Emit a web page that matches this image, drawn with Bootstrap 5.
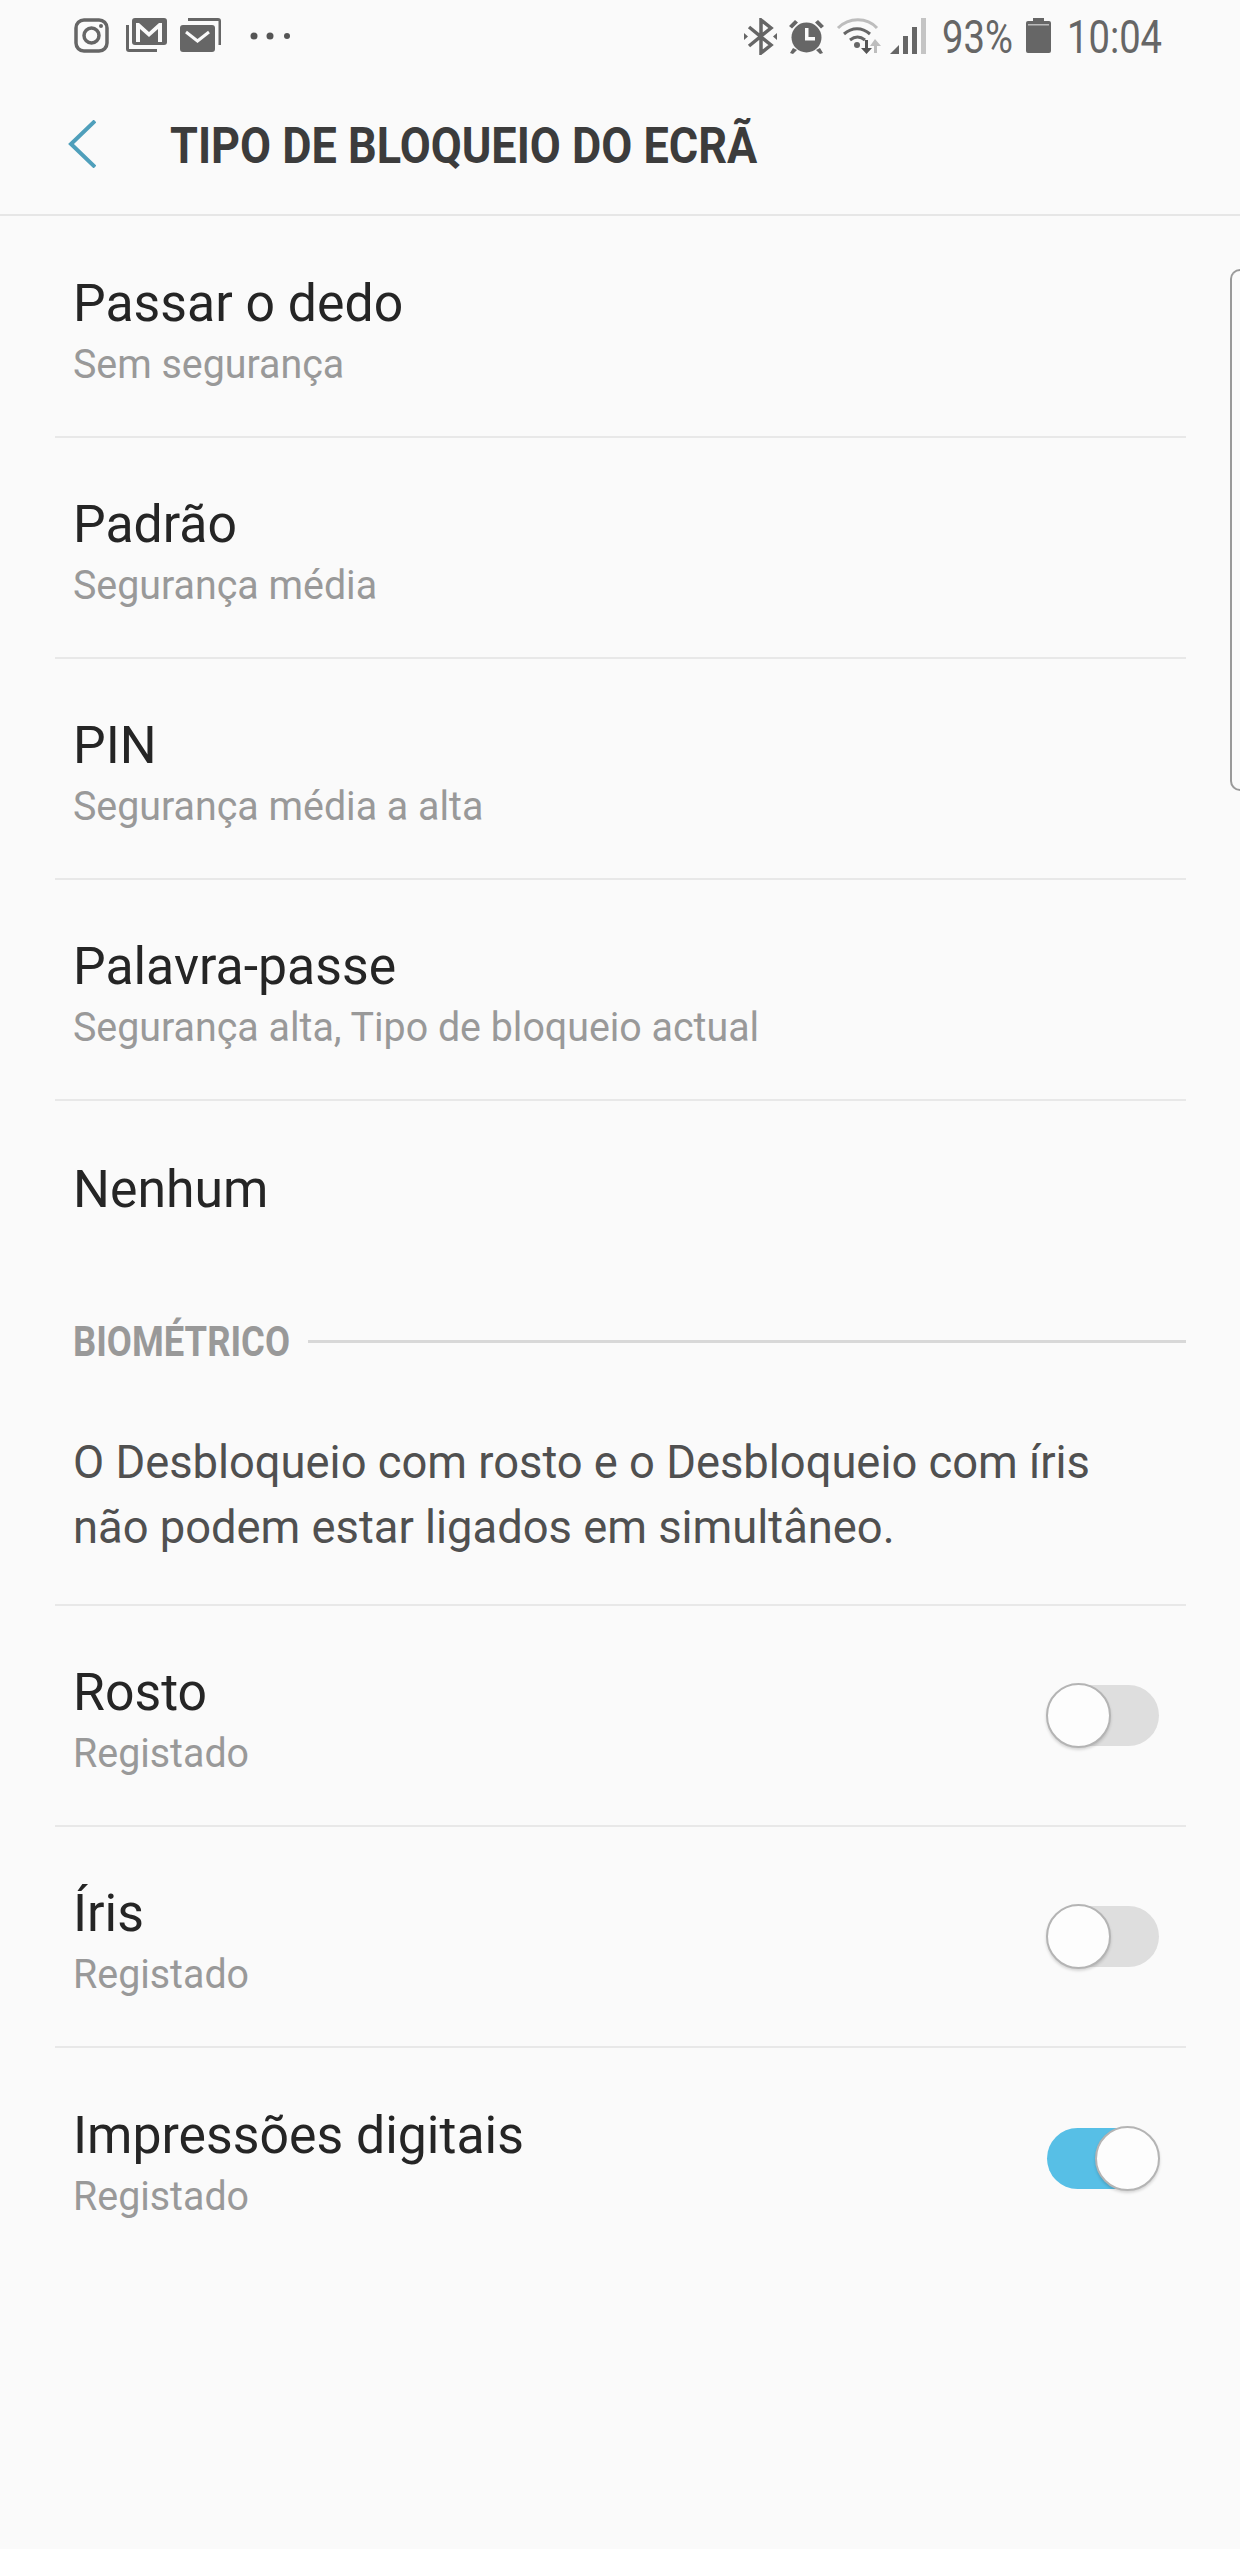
<!DOCTYPE html>
<html lang="pt"><head><meta charset="utf-8"><title>Tipo de bloqueio do ecrã</title>
<link href="https://cdn.jsdelivr.net/npm/bootstrap@5.3.0/dist/css/bootstrap.min.css" rel="stylesheet">
<script src="https://cdn.jsdelivr.net/npm/bootstrap@5.3.0/dist/js/bootstrap.bundle.min.js"></script>
<style>
html,body{background:#fafafa}
body{width:1240px;height:2549px;overflow:hidden;font-family:Roboto,"Liberation Sans",sans-serif;position:relative}
.squeeze{display:inline-block;transform-origin:left center;white-space:nowrap}
.status-bar{height:74px;padding:18px 77px 0 74px}
.status-bar svg{display:block;fill:#666}
.left-icons{gap:16px}
.status-bar svg.insta{fill:none;stroke:#666;stroke-width:3.5}
.status-bar svg.insta circle.dot{fill:#666;stroke:none}
.mail-icon{margin-left:-3px}
.dots{margin-left:13px;margin-top:10px}
.right-icons svg{margin-right:11px}
.right-icons svg.wifi{margin-right:7px}
.right-icons svg.signal{margin-right:16px}
.right-icons svg.battery{margin-right:0}
.status-text{font-size:46px;line-height:37px;color:#666;width:84px;padding-top:1px}
.time-text{width:96px;margin-left:4px}
.s-93{transform:scaleX(.83)}
.s-time{transform:scaleX(.83)}
.app-head{height:142px;border-bottom:2px solid #e6e6e6;padding-left:66px}
.back-arrow{width:30px;height:48px;margin-right:74px}
.page-title{font-size:50px;font-weight:700;color:#3c3c3c;line-height:1;transform:scaleX(.9);padding-top:4px}
.rows{margin:0 54px 0 55px}
.rows.first-rows{margin-top:1px}
.rows .list-group-item{background:transparent;border-color:#e8e8e8;border-width:0 0 2px;padding:0 27px 0 18px;height:221px;display:flex;align-items:center;justify-content:space-between}
.rows .list-group-item.plain{height:177px;border-bottom:0}
.row-title{font-size:51px;line-height:60px;color:#252525;transform:scaleX(1.015)}
.row-sub{font-size:40px;line-height:52px;color:#999;margin-top:5px;transform:scaleX(.984)}
.row-offset{margin-top:12px}
.section-head{height:50px;margin:38px 54px 0 73px;gap:19px}
.section-name{font-size:43px;font-weight:700;color:#999;line-height:1;width:216px}
.section-name span{transform:scaleX(.846)}
.section-line{height:3px;background:#d8d8d8}
.note{font-size:46px;line-height:65px;color:#505050;margin:0;padding:64px 0 44px 18px;white-space:nowrap}
.note span{transform:scaleX(.985);display:block;transform-origin:left}
.bio-rows{border-top:2px solid #e8e8e8}
.track{width:112px;height:61px;border-radius:31px;background:#dedede;display:flex;align-items:center;justify-content:flex-start}
.track.on{background:#57bfe6;justify-content:flex-end}
.knob{width:65px;height:65px;border-radius:50%;background:#fdfdfd;border:2px solid #b4b4b4;box-shadow:0 2px 3px rgba(0,0,0,.15);flex:none}
.track.on .knob{margin-right:-1px}
.track:not(.on) .knob{margin-left:-1px}
.edge-handle{position:absolute;left:1230px;top:269px;width:14px;height:522px;border:2px solid #999;border-right:0;border-radius:10px 0 0 10px}
</style></head>
<body class="m-0">
<div class="status-bar d-flex justify-content-between align-items-start">
  <div class="left-icons d-flex align-items-start">
    <svg class="insta" width="35" height="35" viewBox="0 0 35 35"><rect x="2" y="2" width="31" height="31" rx="8"/><circle cx="17.5" cy="17.5" r="7.5"/><circle class="dot" cx="27" cy="8" r="2"/></svg>
    <svg width="42" height="35" viewBox="0 0 42 35"><path d="M1 7h3v24h28v3H4a3 3 0 0 1-3-3z"/><rect x="7" y="0" width="35" height="27" rx="3"/><path d="M11 24V5h3l10 9 10-9h3v19h-4V11l-9 8-9-8v13z" fill="#fafafa"/></svg>
    <svg class="mail-icon" width="41" height="35" viewBox="0 0 41 35"><path d="M8 0h30a3 3 0 0 1 3 3v24h-2.500V3H8z"/><rect x="0" y="7" width="35" height="27" rx="3"/><path d="M6 14l11.500 9L29 14" fill="none" stroke="#fafafa" stroke-width="3"/></svg>
    <svg class="dots" width="40" height="16" viewBox="0 0 40 16"><circle cx="4" cy="8" r="3.500" fill="#555"/><circle cx="20" cy="8" r="3.500" fill="#555"/><circle cx="37" cy="8" r="3" fill="#555"/></svg>
  </div>
  <div class="right-icons d-flex align-items-start">
    <svg width="33" height="37" viewBox="0 0 33 37"><path d="M5 9l22 18-10 8V2l10 8L5 28" fill="none" stroke="#666" stroke-width="3.500"/><path d="M0 15l4 3.500L0 22zM33 15l-4 3.500L33 22z"/></svg>
    <svg width="37" height="36" viewBox="0 0 37 36"><circle cx="18.500" cy="19.500" r="15"/><path d="M1 8l6-6 3 2.500-6 6zM36 8l-6-6-3 2.500 6 6zM5 30l-3 5 3 1 4-4zM32 30l3 5-3 1-4-4z"/><path d="M17 10h3.500v9H27v3.500H17z" fill="#fafafa"/></svg>
    <svg class="wifi" width="47" height="36" viewBox="0 0 47 36"><path d="M2 10C13-1 31-1 41 10" fill="none" stroke="#bdbdbd" stroke-width="3"/><path d="M8 16c8-7 18-7 26 0M14 22c5-4 10-4 15 0" fill="none" stroke="#666" stroke-width="3"/><circle cx="21" cy="27" r="3"/><path d="M29 22h3v8h4l-5.500 6-5.500-6h4z" fill="#555"/><path d="M39 21l6 7h-4v7h-3v-7h-4z" fill="#bdbdbd"/></svg>
    <svg class="signal" width="36" height="36" viewBox="0 0 36 36"><path d="M0 36l9-9v9z"/><rect x="13" y="18" width="5" height="18"/><rect x="22" y="9" width="5" height="27"/><rect x="31" y="0" width="5" height="36" fill="#c4c4c4"/></svg>
    <div class="status-text"><span class="squeeze s-93">93%</span></div>
    <svg class="battery" width="25" height="35" viewBox="0 0 25 35"><path d="M7 0h11v3h5a2 2 0 0 1 2 2v28a2 2 0 0 1-2 2H2a2 2 0 0 1-2-2V5a2 2 0 0 1 2-2h5z"/><rect x="2" y="6" width="21" height="1.500" fill="#bbb"/></svg>
    <div class="status-text time-text ms-3"><span class="squeeze s-time">10:04</span></div>
  </div>
</div>
<header class="app-head d-flex align-items-center">
  <svg class="back-arrow" viewBox="0 0 30 48"><path d="M29 1L5 24l24 23" fill="none" stroke="#4f9fbb" stroke-width="4"/></svg>
  <h1 class="page-title squeeze m-0">TIPO DE BLOQUEIO DO ECRÃ</h1>
</header>
<div class="list-group list-group-flush rows first-rows">
  <div class="list-group-item"><div class="row-offset"><div class="row-title squeeze">Passar o dedo</div><br><div class="row-sub squeeze">Sem segurança</div></div></div>
  <div class="list-group-item"><div class="row-offset"><div class="row-title squeeze">Padrão</div><br><div class="row-sub squeeze">Segurança média</div></div></div>
  <div class="list-group-item"><div class="row-offset"><div class="row-title squeeze">PIN</div><br><div class="row-sub squeeze">Segurança média a alta</div></div></div>
  <div class="list-group-item"><div class="row-offset"><div class="row-title squeeze">Palavra-passe</div><br><div class="row-sub squeeze">Segurança alta, Tipo de bloqueio actual</div></div></div>
  <div class="list-group-item plain"><div class="row-title squeeze">Nenhum</div></div>
</div>
<div class="section-head d-flex align-items-center">
  <div class="section-name"><span class="squeeze">BIOMÉTRICO</span></div>
  <div class="section-line flex-grow-1"></div>
</div>
<div class="rows">
  <p class="note"><span>O Desbloqueio com rosto e o Desbloqueio com íris</span><span>não podem estar ligados em simultâneo.</span></p>
  <div class="list-group list-group-flush bio-rows">
    <div class="list-group-item"><div class="row-offset"><div class="row-title squeeze">Rosto</div><br><div class="row-sub squeeze">Registado</div></div><div class="track"><div class="knob"></div></div></div>
    <div class="list-group-item"><div class="row-offset"><div class="row-title squeeze">Íris</div><br><div class="row-sub squeeze">Registado</div></div><div class="track"><div class="knob"></div></div></div>
    <div class="list-group-item"><div class="row-offset"><div class="row-title squeeze">Impressões digitais</div><br><div class="row-sub squeeze">Registado</div></div><div class="track on"><div class="knob"></div></div></div>
  </div>
</div>
<div class="edge-handle"></div>
</body></html>
